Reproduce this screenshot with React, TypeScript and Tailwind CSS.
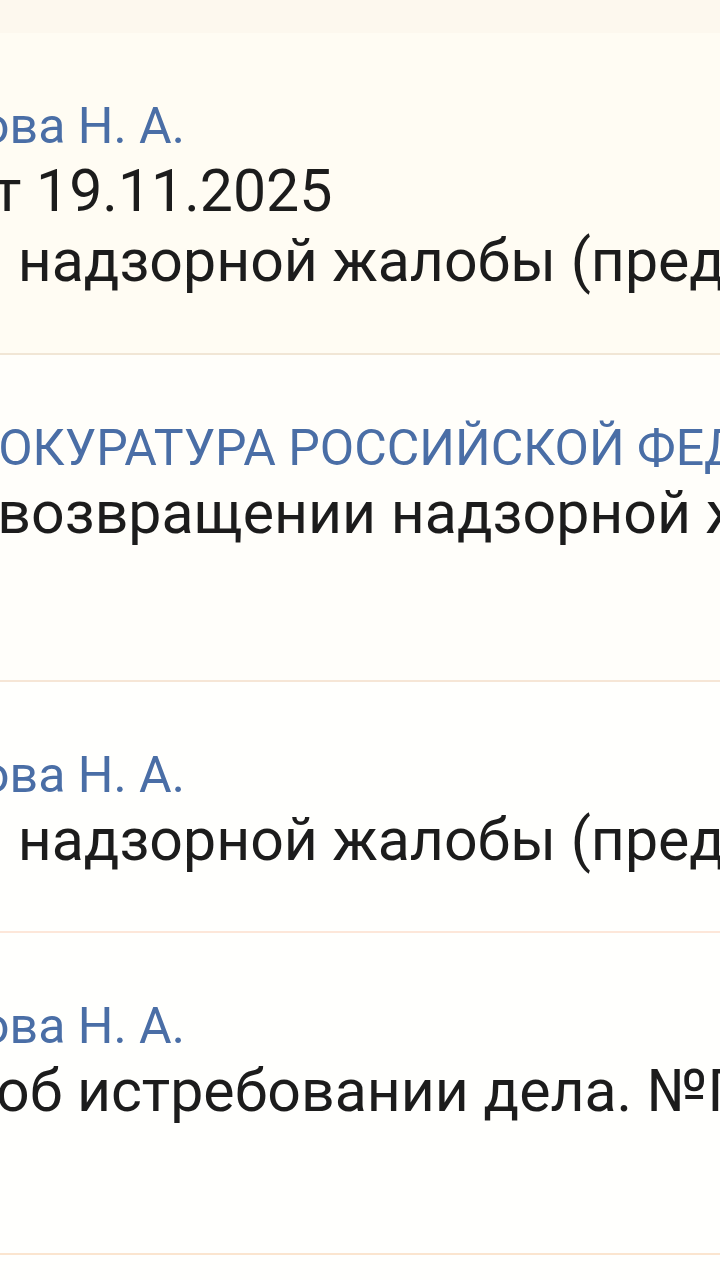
// Cropped, zoomed view of a list of case documents (author line + title lines).
type Row = {
  author: string;
  authorShift: string;
  lines: { text: string; shift: string }[];
  height: string;
  bg: string;
  border: string;
};

const ROWS: Row[] = [
  {
    author: "рова Н. А.",
    authorShift: "-ml-[47px]",
    lines: [
      { text: "от 19.11.2025", shift: "-ml-[40px]" },
      { text: "и надзорной жалобы (представления)", shift: "-ml-[31px]" },
    ],
    height: "h-[322px]",
    bg: "bg-[#fffcf3]",
    border: "border-[#f1e6d5]",
  },
  {
    author: "ПРОКУРАТУРА РОССИЙСКОЙ ФЕДЕРАЦИИ",
    authorShift: "-ml-[69px]",
    lines: [{ text: "о возвращении надзорной жалобы", shift: "-ml-[51px]" }],
    height: "h-[327px]",
    bg: "bg-[#fffefa]",
    border: "border-[#f6e6d6]",
  },
  {
    author: "рова Н. А.",
    authorShift: "-ml-[47px]",
    lines: [{ text: "и надзорной жалобы (представления)", shift: "-ml-[31px]" }],
    height: "h-[251px]",
    bg: "bg-[#fffffd]",
    border: "border-[#fde7d9]",
  },
  {
    author: "рова Н. А.",
    authorShift: "-ml-[47px]",
    lines: [{ text: "об истребовании дела. №П", shift: "-ml-[4px]" }],
    height: "h-[322px]",
    bg: "bg-[#fffffd]",
    border: "border-[#fbe5cf]",
  },
];

function DocRow({ row }: { row: Row }) {
  return (
    <div className={`${row.height} ${row.bg} border-b-2 ${row.border} overflow-hidden pt-[63px]`}>
      <div
        className={`${row.authorShift} whitespace-nowrap text-[50px] leading-[60px] text-[#4a6ea6]`}
      >
        {row.author}
      </div>
      {row.lines.map((l) => (
        <div
          key={l.text}
          className={`${l.shift} whitespace-nowrap text-[59px] leading-[70px] text-[#1c1c1c]`}
        >
          {l.text}
        </div>
      ))}
    </div>
  );
}

export default function App() {
  return (
    <div
      className="h-[1280px] w-[720px] overflow-hidden bg-[#fffffd]"
      style={{ fontFamily: "Roboto, 'Noto Sans', sans-serif" }}
    >
      <div className="h-[33px] bg-[#fdf8ee]" />
      {ROWS.map((r, i) => (
        <DocRow key={i} row={r} />
      ))}
    </div>
  );
}
